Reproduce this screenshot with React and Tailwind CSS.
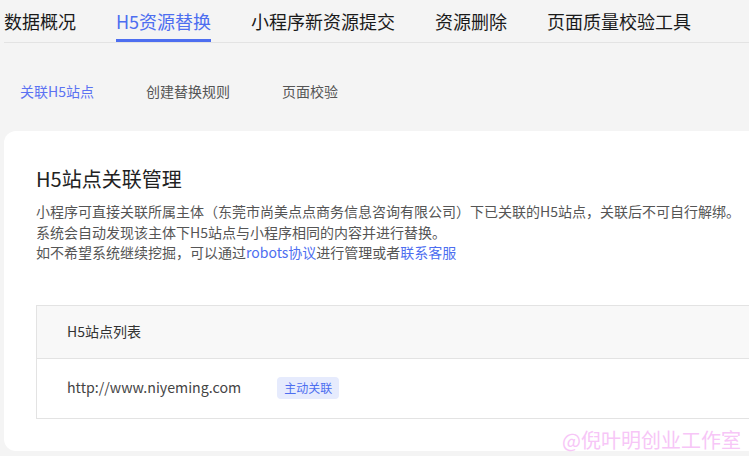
const TABS = ['数据概况', 'H5资源替换', '小程序新资源提交', '资源删除', '页面质量校验工具']
const SUBTABS = ['关联H5站点', '创建替换规则', '页面校验']

export default function App() {
  return (
    <div className="relative w-[749px] h-[456px] overflow-hidden bg-[#f4f4f4] font-['Noto_Sans_CJK_SC',sans-serif]">
      {/* top tabs */}
      <div className="ml-[4px] flex gap-[40px] border-b border-[#e3e3e3] h-[43px]">
        {TABS.map((t, i) => (
          <div key={t} className={`relative pt-[6px] text-[18px] leading-[30px] whitespace-nowrap ${i === 1 ? 'text-[#4d6ef0]' : 'text-[#1a1a1a]'}`}>
            {t}
            {i === 1 && <div className="absolute left-0 right-0 bottom-0 h-[3px] bg-[#4d6ef0]" />}
          </div>
        ))}
      </div>

      {/* sub tabs */}
      <div className="ml-[20px] mt-[37px] flex gap-[52px] text-[14px] leading-[22px] text-[#555]">
        {SUBTABS.map((t, i) => (
          <div key={t} className={i === 0 ? 'text-[#5b72f2]' : ''}>{t}</div>
        ))}
      </div>

      {/* card */}
      <div className="ml-[4px] mt-[29px] w-[800px] h-[320px] bg-white rounded-[12px] pl-[32px] pt-[34px]">
        <h2 className="text-[20px] leading-[28px] text-[#222]">H5站点关联管理</h2>
        <div className="mt-[8px] text-[14px] leading-[20.5px] text-[#555] whitespace-nowrap">
          <p>小程序可直接关联所属主体（东莞市尚美点点商务信息咨询有限公司）下已关联的H5站点，关联后不可自行解绑。</p>
          <p>系统会自动发现该主体下H5站点与小程序相同的内容并进行替换。</p>
          <p>
            如不希望系统继续挖掘，可以通过<span className="text-[#4d6ef0]">robots协议</span>进行管理或者<span className="text-[#4d6ef0]">联系客服</span>
          </p>
        </div>

        <div className="mt-[42px] border border-[#e3e3e3] text-[14px]">
          <div className="h-[53px] bg-[#f8f8f8] border-b border-[#e3e3e3] pl-[30px] flex items-center text-[#333]">
            H5站点列表
          </div>
          <div className="h-[59px] pl-[30px] flex items-center">
            <span className="text-[14.2px] text-[#444]">http://www.niyeming.com</span>
            <span className="ml-[36px] px-[7px] h-[22px] leading-[22px] rounded-[4px] bg-[#e6ebfd] text-[#4d6ef0] text-[12px]">主动关联</span>
          </div>
        </div>
      </div>

      {/* watermark */}
      <div className="absolute right-[8px] bottom-[5px] text-[20px] leading-[22px] text-[#f7c6f7]">@倪叶明创业工作室</div>
    </div>
  )
}
